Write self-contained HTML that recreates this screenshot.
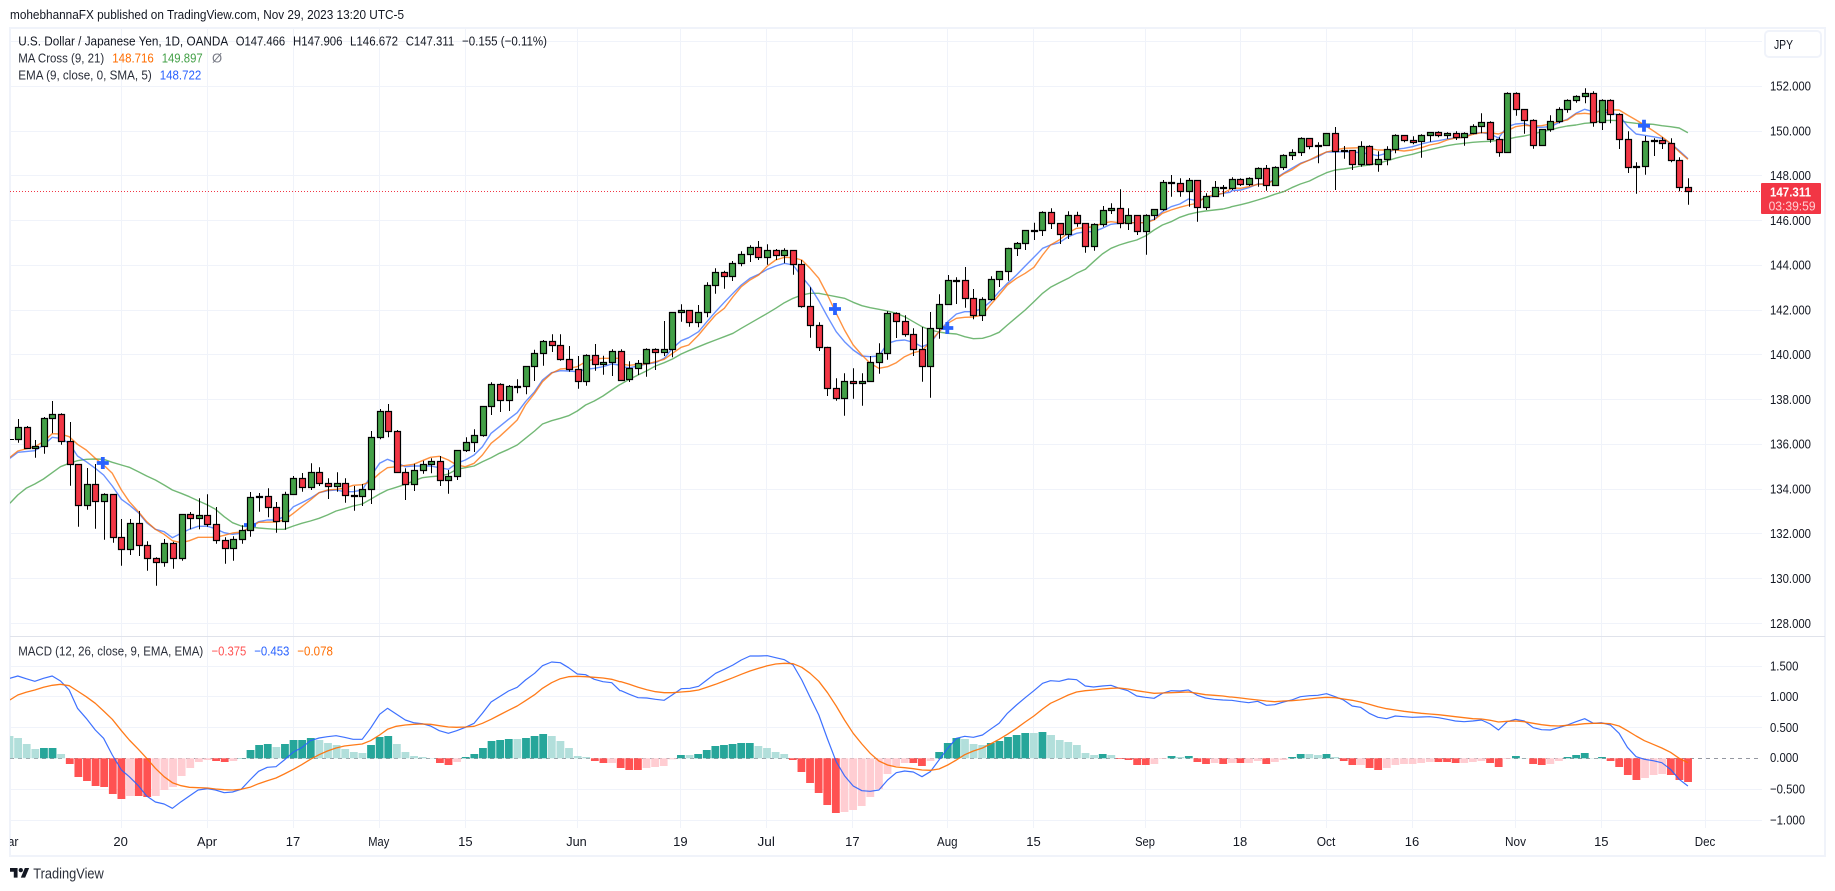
<!DOCTYPE html>
<html lang="en">
<head>
<meta charset="utf-8">
<title>USD/JPY chart</title>
<style>
html,body{margin:0;padding:0;width:1835px;height:891px;overflow:hidden;background:#fff}
svg{position:absolute;left:0;top:0;display:block}
text{font-family:"Liberation Sans",sans-serif;font-size:13px;fill:#131722;dominant-baseline:auto}
</style>
</head>
<body>
<svg id="c" width="1835" height="891" viewBox="0 0 1835 891" xmlns="http://www.w3.org/2000/svg">
<defs><clipPath id="pane"><rect x="10" y="28" width="1752" height="800"/></clipPath></defs>

<!-- frame -->
<rect x="10" y="28" width="1815" height="828" fill="#fff" stroke="#f0f3fa" stroke-width="2"/>

<!-- grid -->
<path fill="none" stroke="#f0f3fa" stroke-width="1" d="M10 41.5H1762M10 86.5H1762M10 131.5H1762M10 175.5H1762M10 220.5H1762M10 265.5H1762M10 310.5H1762M10 354.5H1762M10 399.5H1762M10 444.5H1762M10 489.5H1762M10 533.5H1762M10 578.5H1762M10 623.5H1762M10 666.5H1762M10 696.5H1762M10 727.5H1762M10 789.5H1762M10 820.5H1762
M121.5 28V828M207.5 28V828M293.5 28V828M379.5 28V828M465.5 28V828M577.5 28V828M680.5 28V828M766.5 28V828M852.5 28V828M947.5 28V828M1033.5 28V828M1145.5 28V828M1240.5 28V828M1326.5 28V828M1412.5 28V828M1515.5 28V828M1601.5 28V828M1705.5 28V828"/>
<path d="M10 636.5H1825" stroke="#e0e3eb" stroke-width="1"/>
<path d="M10 758.5H1762" stroke="#9598a1" stroke-width="1" stroke-dasharray="4 4"/>
<path d="M10 191.5H1762" stroke="#f23645" stroke-width="1" stroke-dasharray="1 2"/>

<g id="chart" clip-path="url(#pane)"></g>

<!-- header -->
<text x="10" y="19" textLength="394" lengthAdjust="spacingAndGlyphs">mohebhannaFX published on TradingView.com, Nov 29, 2023 13:20 UTC-5</text>

<!-- legend -->
<text x="18.2" y="45.7" textLength="210" lengthAdjust="spacingAndGlyphs">U.S. Dollar / Japanese Yen, 1D, OANDA</text>
<text x="235.7" y="45.7" textLength="49.5" lengthAdjust="spacingAndGlyphs">O147.466</text>
<text x="293" y="45.7" textLength="49.5" lengthAdjust="spacingAndGlyphs">H147.906</text>
<text x="350" y="45.7" textLength="48" lengthAdjust="spacingAndGlyphs">L146.672</text>
<text x="405.7" y="45.7" textLength="48.5" lengthAdjust="spacingAndGlyphs">C147.311</text>
<text x="462" y="45.7" textLength="85" lengthAdjust="spacingAndGlyphs">−0.155 (−0.11%)</text>

<text x="18.2" y="62.7" textLength="86" lengthAdjust="spacingAndGlyphs" style="fill:#2a2e39">MA Cross (9, 21)</text>
<text x="112.3" y="62.7" textLength="41.5" lengthAdjust="spacingAndGlyphs" style="fill:#ff6d00">148.716</text>
<text x="161.7" y="62.7" textLength="41" lengthAdjust="spacingAndGlyphs" style="fill:#43a047">149.897</text>
<text x="212" y="62.7" style="fill:#787b86">Ø</text>

<text x="18.2" y="79.7" textLength="133.6" lengthAdjust="spacingAndGlyphs" style="fill:#2a2e39">EMA (9, close, 0, SMA, 5)</text>
<text x="159.7" y="79.7" textLength="41.6" lengthAdjust="spacingAndGlyphs" style="fill:#2962ff">148.722</text>

<text x="18.2" y="655.7" textLength="185" lengthAdjust="spacingAndGlyphs" style="fill:#2a2e39">MACD (12, 26, close, 9, EMA, EMA)</text>
<text x="211.5" y="655.7" textLength="34.8" lengthAdjust="spacingAndGlyphs" style="fill:#ff5252">−0.375</text>
<text x="254.2" y="655.7" textLength="35.2" lengthAdjust="spacingAndGlyphs" style="fill:#2962ff">−0.453</text>
<text x="297.3" y="655.7" textLength="35.6" lengthAdjust="spacingAndGlyphs" style="fill:#ff6d00">−0.078</text>

<!-- JPY button -->
<rect x="1765" y="31" width="56" height="26" rx="4" fill="#fff" stroke="#f0f3fa" stroke-width="2"/>
<text x="1774" y="49" textLength="19" lengthAdjust="spacingAndGlyphs">JPY</text>

<!-- price axis -->
<g>
<text x="1770" y="90.5" textLength="41" lengthAdjust="spacingAndGlyphs">152.000</text>
<text x="1770" y="135.5" textLength="41" lengthAdjust="spacingAndGlyphs">150.000</text>
<text x="1770" y="180" textLength="41" lengthAdjust="spacingAndGlyphs">148.000</text>
<text x="1770" y="225" textLength="41" lengthAdjust="spacingAndGlyphs">146.000</text>
<text x="1770" y="269.5" textLength="41" lengthAdjust="spacingAndGlyphs">144.000</text>
<text x="1770" y="314.5" textLength="41" lengthAdjust="spacingAndGlyphs">142.000</text>
<text x="1770" y="359" textLength="41" lengthAdjust="spacingAndGlyphs">140.000</text>
<text x="1770" y="404" textLength="41" lengthAdjust="spacingAndGlyphs">138.000</text>
<text x="1770" y="448.5" textLength="41" lengthAdjust="spacingAndGlyphs">136.000</text>
<text x="1770" y="493.5" textLength="41" lengthAdjust="spacingAndGlyphs">134.000</text>
<text x="1770" y="538" textLength="41" lengthAdjust="spacingAndGlyphs">132.000</text>
<text x="1770" y="583" textLength="41" lengthAdjust="spacingAndGlyphs">130.000</text>
<text x="1770" y="628" textLength="41" lengthAdjust="spacingAndGlyphs">128.000</text>
<text x="1770" y="670.5" textLength="28.4" lengthAdjust="spacingAndGlyphs">1.500</text>
<text x="1770" y="701" textLength="28.4" lengthAdjust="spacingAndGlyphs">1.000</text>
<text x="1770" y="732" textLength="28.4" lengthAdjust="spacingAndGlyphs">0.500</text>
<text x="1770" y="762" textLength="28.4" lengthAdjust="spacingAndGlyphs">0.000</text>
<text x="1770" y="793.5" textLength="35" lengthAdjust="spacingAndGlyphs">−0.500</text>
<text x="1770" y="824.5" textLength="35" lengthAdjust="spacingAndGlyphs">−1.000</text>
</g>

<!-- price tag -->
<rect x="1761" y="183" width="60" height="31" rx="1" fill="#f23645"/>
<text x="1770" y="196.5" textLength="41" lengthAdjust="spacingAndGlyphs" style="fill:#fff;font-weight:bold">147.311</text>
<text x="1768.6" y="210.5" textLength="47" lengthAdjust="spacingAndGlyphs" style="fill:#ffd0d4">03:39:59</text>

<!-- time axis -->
<g text-anchor="middle">
<clipPath id="tclip"><rect x="10" y="828" width="1752" height="26"/></clipPath>
<text x="8" y="846" clip-path="url(#tclip)" textLength="21" lengthAdjust="spacingAndGlyphs">Mar</text>
<text x="120.6" y="846">20</text>
<text x="207" y="846" textLength="20" lengthAdjust="spacingAndGlyphs">Apr</text>
<text x="293" y="846">17</text>
<text x="378.8" y="846" textLength="21" lengthAdjust="spacingAndGlyphs">May</text>
<text x="465.4" y="846">15</text>
<text x="576.5" y="846" textLength="20.5" lengthAdjust="spacingAndGlyphs">Jun</text>
<text x="680.4" y="846">19</text>
<text x="766.2" y="846" textLength="17.4" lengthAdjust="spacingAndGlyphs">Jul</text>
<text x="852.4" y="846">17</text>
<text x="947.3" y="846" textLength="20.5" lengthAdjust="spacingAndGlyphs">Aug</text>
<text x="1033.5" y="846">15</text>
<text x="1145" y="846" textLength="19.8" lengthAdjust="spacingAndGlyphs">Sep</text>
<text x="1240" y="846">18</text>
<text x="1326" y="846" textLength="18.6" lengthAdjust="spacingAndGlyphs">Oct</text>
<text x="1412" y="846">16</text>
<text x="1515.5" y="846" textLength="21" lengthAdjust="spacingAndGlyphs">Nov</text>
<text x="1601.3" y="846">15</text>
<text x="1705" y="846" textLength="20.5" lengthAdjust="spacingAndGlyphs">Dec</text>
</g>

<!-- logo -->
<g transform="translate(10 865.8) scale(.54)" fill="#131722"><path d="M14 22H7V11H0V4h14v18zM28 22h-8l7.5-18h8L28 22z"/><circle cx="20" cy="8" r="4"/></g>
<text x="33.3" y="878.5" textLength="70.5" lengthAdjust="spacingAndGlyphs" style="font-size:15px;fill:#2a2e39">TradingView</text>

<script>
(function(){
var NS="http://www.w3.org/2000/svg",g=document.getElementById("chart");
function el(n,a){var e=document.createElementNS(NS,n);for(var k in a)e.setAttribute(k,a[k]);g.appendChild(e);return e}
function X(i){return 121.8+8.608*i}
var S=2.529;
function line(color,w,op,segs){
 var pts=[],last=-1;
 segs.forEach(function(s){
  s[2].trim().split(/\s+/).forEach(function(p){
   var q=p.split(","),x=s[0]+q[0]/S,y=s[1]+q[1]/3;
   if(x>last){pts.push(x.toFixed(1)+","+y.toFixed(1));last=x}
  })
 });
 el("polyline",{points:pts.join(" "),fill:"none",stroke:color,"stroke-width":w,"stroke-opacity":op,"stroke-linejoin":"round"});
}

/* MACD histogram */
var H={d:"#26a69a",l:"#b2dfdb",r:"#ff5252",p:"#ffcdd2"},Z=758.3;
[[600,-13,"l408 l414 l432 l447 d444 d444 l462 r492 r531 r543 r558 r561 r582 r597 p588 r588 r591 p588 p570 p561 p528 p504 p486 p480 r483 r486 p483 d474 d450 d435 d432 l441 d432 d420 d420 d414 l420 l429 l435 l447 l456 l459 d435 d411 d408 l432 l456 l468 l471 l474 r489 r495 p486 d471 d462 d444 d423 d420 d417 l417 d414 d408 d402 l408 l423 l444 l468 l471 r483 r489"],
 [620,57,"p429 r444 r450 r450 p444 p441 p438 p418 d405 l405 d402 d390 d378 d375 d372 d369 d369 l378 l384 l396 l402 r420 r456 r489 r519 r555 r579 p576 p570 p558 p531 p507 p462 p438 p429 r429 r438 p423 d396 d369 d354 l357 l372 l375 d369 d363 d351 d345 d339 l339 d336 l345 l360 l366 l375 l399 l405 d402 l405 r417 r420 r435 r435 p432 p417 d408 l411 d408 r426 r432 p429 r432 p429 r429 p429 p423 r432 p426 p420 d411 d402 l402 l405 d402 l411 r423 r435 p435 r444 r450 p444 p435 p432 p432 p429 p426 r426 r426 r429 p429 p426 p423 r429 r441 p417 d408 l414 r432 r435 p432 p423 d411 d405 d399 l414 d411 r423 r441 r465 r480 p474 p465 p462 r465 r480 r486"]
].forEach(function(s){
 var i=s[1];
 s[2].split(" ").forEach(function(t){
  var c=t[0],y=s[0]+(+t.slice(1))/3,top=Math.min(y,Z),h=Math.abs(y-Z);
  if(h>0.2)el("rect",{x:(X(i)-4.3).toFixed(2),y:top.toFixed(1),width:7.8,height:h.toFixed(1),fill:H[c]});
  i++;
 });
});

/* MACD lines */
line("#2962ff",1.2,.9,[
[0,600,"25,235 45,228 66,236 88,244 110,235 132,228 153,243 175,270 196,325 218,355 241,390 262,415 284,465 307,510 327,530 350,557 371,588 393,606 415,612 436,625 458,605 479,588 501,570 525,566 545,570 567,578 588,576 610,568 632,540 654,514 676,502 698,500 719,480 742,456 763,443 785,422 807,414 828,410 850,407 871,412 893,418 916,418 937,385 960,343 980,325 1002,342 1025,360 1046,368 1068,371 1089,378 1111,392 1134,400 1155,392 1177,382 1199,370 1220,340 1242,306 1263,290 1286,273 1308,262 1329,240 1352,220 1372,197 1395,186 1417,188 1438,203 1460,222 1481,224 1503,238 1525,245 1547,248 1568,272"],
[610,620,"28,212 49,223 71,233 93,234 115,238 137,241 158,224 180,206 202,205 224,199 245,180 267,160 289,148 311,135 332,120 354,108 376,108 398,107 419,113 441,119 463,135 485,180 506,232 528,285 550,357 572,425 593,467 615,498 637,512 658,514 680,510 702,480 724,458 745,453 767,456 789,470 810,455 832,420 854,385 876,355 897,349 919,352 942,345 962,328 984,310 1005,280 1028,255 1050,233 1072,212 1094,190 1114,182 1136,184 1159,177 1180,179 1202,198 1223,201 1245,198 1267,196 1288,205 1310,212 1332,228 1354,232 1376,235 1397,220 1419,212 1441,213 1463,210 1485,226 1506,234 1528,238 1550,240 1568,241"],
[1215,620,"42,241 65,245 85,248 108,244 130,256 151,254 173,246 194,240 216,230 239,227 260,226 282,221 304,230 325,240 347,258 368,262 390,280 412,292 434,296 456,288 478,290 499,292 522,291 543,290 565,293 587,298 608,303 630,305 652,303 674,300 696,312 717,330 739,305 760,298 782,303 805,323 826,329 848,330 869,323 891,315 913,305 935,296 957,310 977,308 1000,315 1022,340 1043,382 1065,410 1086,418 1108,422 1130,428 1152,448 1174,478 1196,498"]]);
line("#ff6d00",1.3,.9,[
[0,600,"25,300 45,285 66,277 88,270 110,262 132,256 153,253 175,257 196,273 218,290 241,310 262,333 284,358 307,392 327,420 350,448 371,475 393,505 415,530 436,548 458,557 479,562 501,563 525,564 545,567 567,569 588,570 610,568 632,562 654,551 676,542 698,534 719,522 742,508 763,494 785,478 807,464 828,453 850,444 871,438 893,435 916,432 937,422 960,405 980,388 1002,379 1025,375 1046,373 1068,372 1089,373 1111,377 1134,381 1155,382 1177,381 1199,379 1220,370 1242,358 1263,345 1286,331 1308,318 1329,302 1352,284 1372,265 1395,248 1417,236 1438,230 1460,229 1481,230 1503,232 1525,234 1547,238 1568,245"],
[610,620,"28,185 49,193 71,202 93,209 115,215 137,218 158,218 180,216 202,214 224,210 245,202 267,193 289,183 311,173 332,163 354,153 376,145 398,137 419,132 441,130 463,131 485,142 506,160 528,184 550,218 572,258 593,300 615,340 637,372 658,400 680,423 702,435 724,441 745,443 767,446 789,450 810,451 832,447 854,435 876,420 897,404 919,393 942,384 962,372 984,358 1005,343 1028,325 1050,306 1072,288 1094,267 1114,250 1136,238 1159,225 1180,216 1202,212 1223,210 1245,207 1267,205 1288,204 1310,207 1332,212 1354,216 1376,220 1397,219 1419,218 1441,217 1463,216 1485,220 1506,224 1528,226 1550,228 1568,231"],
[1215,620,"42,231 65,234 85,237 108,240 130,243 151,245 173,243 194,242 216,240 239,237 260,234 282,232 304,233 325,237 347,241 368,246 390,253 412,260 434,266 456,270 478,274 499,277 522,280 543,282 565,284 587,287 608,290 630,293 652,296 674,297 696,301 717,306 739,304 760,303 782,305 805,310 826,314 848,317 869,318 891,316 913,314 935,311 957,310 977,310 1000,311 1022,318 1043,332 1065,348 1086,362 1108,373 1130,384 1152,397 1174,415 1196,428"]]);

/* price MAs */
line("#43a047",1.4,.75,[
[0,300,"25,610 45,585 66,565 88,552 110,537 132,518 153,500 175,490 196,482 218,478 241,477 262,478 284,487 307,495 327,502 350,515 371,528 393,540 415,555 436,570 458,580 479,590 501,602 525,615 545,628 567,650 588,668 610,678 632,681 654,684 676,686 698,688 719,688 742,678 763,670 785,663 807,655 828,645 850,633 871,626 893,618 916,612 937,598 960,582 980,570 1002,562 1025,553 1046,543 1068,533 1089,530 1111,528 1134,522 1155,508 1177,503 1199,498 1220,485 1242,473 1263,460 1286,448 1308,435 1329,415 1352,393 1372,372 1395,362 1417,355 1438,347 1460,333 1481,315 1503,303 1525,288 1547,270 1566,255"],
[610,180,"28,612 49,598 71,585 93,572 115,558 137,548 158,537 180,522 199,512 224,500 245,490 267,480 289,470 311,460 332,445 354,430 376,415 398,400 419,385 441,368 463,355 485,345 506,340 528,340 550,345 572,350 593,355 615,367 637,377 658,383 680,388 702,393 724,400 745,410 767,425 789,440 810,450 832,456 854,460 876,462 897,470 919,476 942,475 962,468 984,457 1005,435 1028,412 1050,390 1072,365 1094,340 1114,322 1136,308 1159,295 1180,280 1202,268 1223,245 1245,222 1267,205 1288,195 1310,187 1332,180 1354,168 1376,150 1397,135 1419,125 1441,112 1463,103 1485,97 1506,93 1528,90 1550,87 1568,82"],
[1215,0,"42,620 65,614 85,608 108,600 130,592 151,583 173,575 194,563 216,552 239,543 260,530 282,518 304,510 325,507 347,503 368,498 390,495 412,490 434,483 456,475 478,468 499,463 522,455 543,449 565,443 587,437 608,433 630,430 652,427 674,425 696,424 717,421 739,418 760,412 782,408 805,402 826,395 848,390 869,383 891,378 913,375 935,370 957,368 977,362 1000,361 1022,362 1043,367 1065,370 1086,372 1108,373 1130,377 1152,380 1174,384 1196,398"]]);
line("#2962ff",1.4,.7,[
[0,300,"25,475 45,457 88,452 110,435 132,412 153,415 175,430 196,468 218,485 241,505 262,525 284,558 307,598 327,615 350,638 371,668 393,688 415,695 436,713 458,700 479,688 501,679 525,679 545,686 567,698 588,703 610,700 632,680 654,665 676,660 698,660 719,650 742,620 763,608 785,595 807,578 828,572 850,570 871,575 893,575 916,570 937,530 960,490 980,478 1002,488 1025,500 1046,498 1068,498 1089,498 1111,503 1134,508 1155,490 1177,480 1199,465 1220,440 1242,400 1263,380 1286,358 1308,338 1329,305 1352,275 1372,240 1395,218 1417,212 1438,213 1460,215 1481,208 1503,205 1525,200 1547,192 1566,195"],
[610,180,"28,560 49,563 71,558 93,552 115,548 137,535 158,505 180,482 199,473 224,455 245,425 267,395 289,367 311,340 332,315 354,295 376,283 398,268 419,258 441,250 463,255 485,290 506,320 528,362 550,410 572,455 593,485 615,510 637,528 658,530 680,528 702,490 724,482 745,480 767,487 789,500 810,490 832,455 854,425 876,402 897,395 919,395 942,385 962,365 984,335 1005,310 1028,285 1050,258 1072,232 1094,205 1114,195 1136,188 1159,170 1180,160 1202,155 1223,155 1245,145 1267,133 1288,130 1310,128 1332,128 1354,128 1376,118 1397,95 1419,80 1441,72 1463,57 1485,62 1506,55 1528,47 1550,40 1568,37"],
[1215,0,"42,572 65,570 85,563 108,552 130,552 151,537 173,520 194,505 216,490 239,480 260,470 282,456 304,456 325,455 347,456 368,458 390,462 412,467 434,460 456,448 478,445 499,440 522,432 543,426 565,422 587,417 608,414 630,412 652,400 674,398 696,402 717,414 739,380 760,372 782,370 805,382 826,382 848,380 869,368 891,358 913,340 935,328 957,335 977,333 1000,340 1022,345 1043,378 1065,402 1086,406 1108,410 1130,415 1152,430 1174,452 1196,476"]]);
line("#ff6d00",1.4,.75,[
[0,300,"25,472 45,453 88,440 110,425 132,401 153,402 175,410 196,433 218,450 241,475 262,495 284,520 307,570 327,605 350,635 371,665 393,688 415,703 436,722 458,728 479,722 501,712 545,712 567,706 588,699 610,696 632,683 654,667 698,666 719,660 742,640 763,620 785,600 807,578 828,570 850,568 871,565 893,556 916,554 937,545 960,520 980,503 1002,500 1046,493 1068,482 1089,472 1111,469 1134,480 1155,495 1177,500 1199,490 1220,465 1242,430 1263,410 1286,385 1308,360 1329,315 1352,280 1372,245 1395,220 1417,207 1438,205 1460,200 1481,185 1503,177 1525,175 1566,175"],
[610,180,"28,552 49,556 71,553 93,552 115,545 137,538 158,520 180,502 199,495 224,465 245,435 267,405 289,385 311,350 332,320 354,300 376,285 398,258 419,240 441,232 463,233 485,240 506,265 528,295 550,345 572,400 593,450 615,495 637,525 658,550 680,565 702,560 724,548 745,530 767,518 789,512 810,485 832,455 854,430 876,415 897,412 919,411 942,405 962,375 984,345 1005,315 1028,295 1050,280 1072,262 1094,225 1114,195 1136,180 1159,158 1180,145 1202,143 1223,140 1245,130 1267,125 1288,128 1310,128 1332,128 1354,128 1376,120 1397,100 1419,90 1441,82 1463,75 1485,70 1506,50 1528,45 1550,40 1568,28"],
[1215,0,"42,564 65,565 85,560 108,553 130,552 151,540 173,522 194,510 216,492 239,480 260,467 282,456 304,450 325,445 347,444 368,443 390,445 412,450 434,450 456,450 478,453 499,450 522,443 543,435 565,430 587,420 608,414 630,412 652,403 674,398 696,398 717,402 739,392 760,380 782,376 805,378 826,377 848,372 869,365 891,360 913,342 935,340 957,343 977,330 1000,330 1022,330 1043,345 1065,360 1086,375 1108,392 1130,410 1152,430 1174,455 1196,478"]]);

/* crosses */
[[102.8,463],[250,525],[835,309],[947.3,328],[1644,125.7]].forEach(function(p){
 el("path",{d:"M"+(p[0]-6)+" "+p[1]+"h12M"+p[0]+" "+(p[1]-6)+"v12",stroke:"#2962ff","stroke-width":3.8,fill:"none"});
});

/* candles: colour top,bottom,wickTop,wickBottom */
var wick="",green="",red="";
[[300,-12,"g382,418,357,428 r382,445,378,447 g439,445,420,473 g355,439,351,461 g343,355,303,400 r343,424,340,434 r424,493,366,557 r493,616,493,680 g553,616,504,629 r553,604,492,686 g583,604,580,719 r583,712,583,728 r712,748,657,797 g670,748,657,765 r670,736,633,768 r736,775,724,812 r775,787,772,857 g730,787,717,800 r730,775,725,806 g643,775,643,782 r643,655,636,688 g646,655,595,688 r646,673,583,680 r673,721,621,731 r721,745,712,791 g718,745,709,782 g691,718,676,731 g592,691,576,710 r589,592,579,635 r589,622,565,652 r622,664,606,698 g583,664,575,689 g535,583,528,585 r535,562,519,575 g517,562,490,570 r517,550,502,558 r550,559,535,597 g550,559,517,575 r550,586,535,608 r586,589,558,632 g568,589,552,618 g412,568,393,612 g334,412,327,418 r334,394,312,412 r394,517,390,517 r517,551,505,600 g511,551,491,573 g493,511,482,521 g484,493,475,520 r484,541,468,558 g529,541,510,581 g451,529,451,540 g427,451,412,456 g406,427,388,456 g319,406,319,410 g253,319,247,345 r253,301,250,336 g259,301,255,333 r259,261,238,280 g199,259,199,283 g160,199,149,243 g124,160,120,197 r124,136,103,156 r136,178,103,182 r178,208,138,215 r208,244,168,266 g166,244,163,257 r166,193,132,212 g187,193,167,224 g154,187,148,228"],
 [180,58,"r514,600,508,602 g565,598,544,606 g550,565,540,585 g508,550,505,590 r508,517,505,570 g508,517,423,528 g397,508,397,532 g391,397,373,425 r391,427,391,440 g397,427,375,442 g316,397,307,412 g277,316,265,341 r277,289,272,326 g250,289,243,303 g223,250,214,259 g202,223,196,246 r202,232,183,240 g211,232,193,254 r211,226,207,240 g211,226,205,250 r211,253,211,284 r253,379,240,383 r379,436,322,473 r436,502,427,513 r502,625,500,648 r625,655,595,662 g604,655,580,707 r604,610,565,656 g604,610,580,677 g547,604,528,605 g520,547,490,581 g400,520,394,539 r400,424,397,474 r424,463,406,470 r463,508,445,528 r508,559,441,605 g445,559,396,653 g373,445,343,476 g301,373,285,374 r301,303,292,372 r301,355,261,383 r355,406,327,418 g358,406,352,423 g298,358,289,362 g274,298,274,321 g205,274,203,302 g190,205,186,228 g151,190,151,210 r151,152,128,180 g97,151,94,168 r97,130,85,147 r130,163,130,192 g106,163,94,177 r106,130,95,140 r130,199,130,218 g133,199,130,212 g91,133,78,140 g85,91,70,102 r85,130,28,145 g106,130,85,150 r106,154,106,165 g106,154,103,224 g88,106,88,120 g7,88,0,92 r7,9,-15,50 r10,34,-5,50 g1,34,-6,80 r1,82,1,125 g49,82,40,90 g22,49,3,50 r22,24,15,50"],
 [0,129,"g538,563,532,570 r538,553,535,558 g535,553,532,558 g505,535,502,560 r505,556,495,572 g502,556,499,558 g466,502,463,510 g457,466,448,480 g415,457,412,468 r415,439,415,448 r436,439,427,490 g400,436,400,438 r400,454,381,570 r451,454,438,476 r451,493,451,510 g439,493,424,500 r439,493,436,496 g478,493,454,515 g448,478,439,496 g406,448,403,460 r406,421,406,427 r421,425,409,433 g406,424,403,473 g397,406,397,425 r397,406,394,412 g400,406,397,416 r400,412,394,420 g400,412,397,437 g379,400,373,403 g367,379,340,400 r367,418,364,428 r418,457,412,470 g278,457,277,457 r278,328,277,347 r328,361,328,401 r361,436,358,446 g388,436,388,436 g364,388,346,395 g328,364,322,370 g301,328,298,338 g289,301,286,308 g278,289,265,310 r278,367,274,380 g301,367,298,390 r301,343,298,370 r343,418,340,447 r418,502,394,519 r499,502,487,581 g424,499,408,524 r421,424,415,468 r421,430,412,447 r430,481,415,487 r481,562,472,574 r562,574,535,614"]
].forEach(function(s){
 var i=s[1];
 s[2].split(" ").forEach(function(t){
  var c=t[0],v=t.slice(1).split(",").map(Number),
   y0=s[0],cx=Math.floor(X(i)),
   a=Math.round(y0+v[0]/3)+.5,b=Math.round(y0+v[1]/3)+.5,
   h=y0+v[2]/3,l=y0+v[3]/3;
  wick+="M"+(cx+.5)+" "+h.toFixed(1)+"V"+l.toFixed(1);
  var d="M"+(cx-2.5)+" "+a+"h6V"+b+"h-6z";
  if(c=="g")green+=d;else red+=d;
  i++;
 });
});
el("path",{d:wick,stroke:"#000","stroke-width":1,fill:"none"});
el("path",{d:green,stroke:"#000","stroke-width":1.2,fill:"#43a047"});
el("path",{d:red,stroke:"#000","stroke-width":1.2,fill:"#f23645"});
el("path",{d:"M10 439.5h4",stroke:"#000","stroke-width":1});
})();
</script>
</svg>
</body>
</html>
